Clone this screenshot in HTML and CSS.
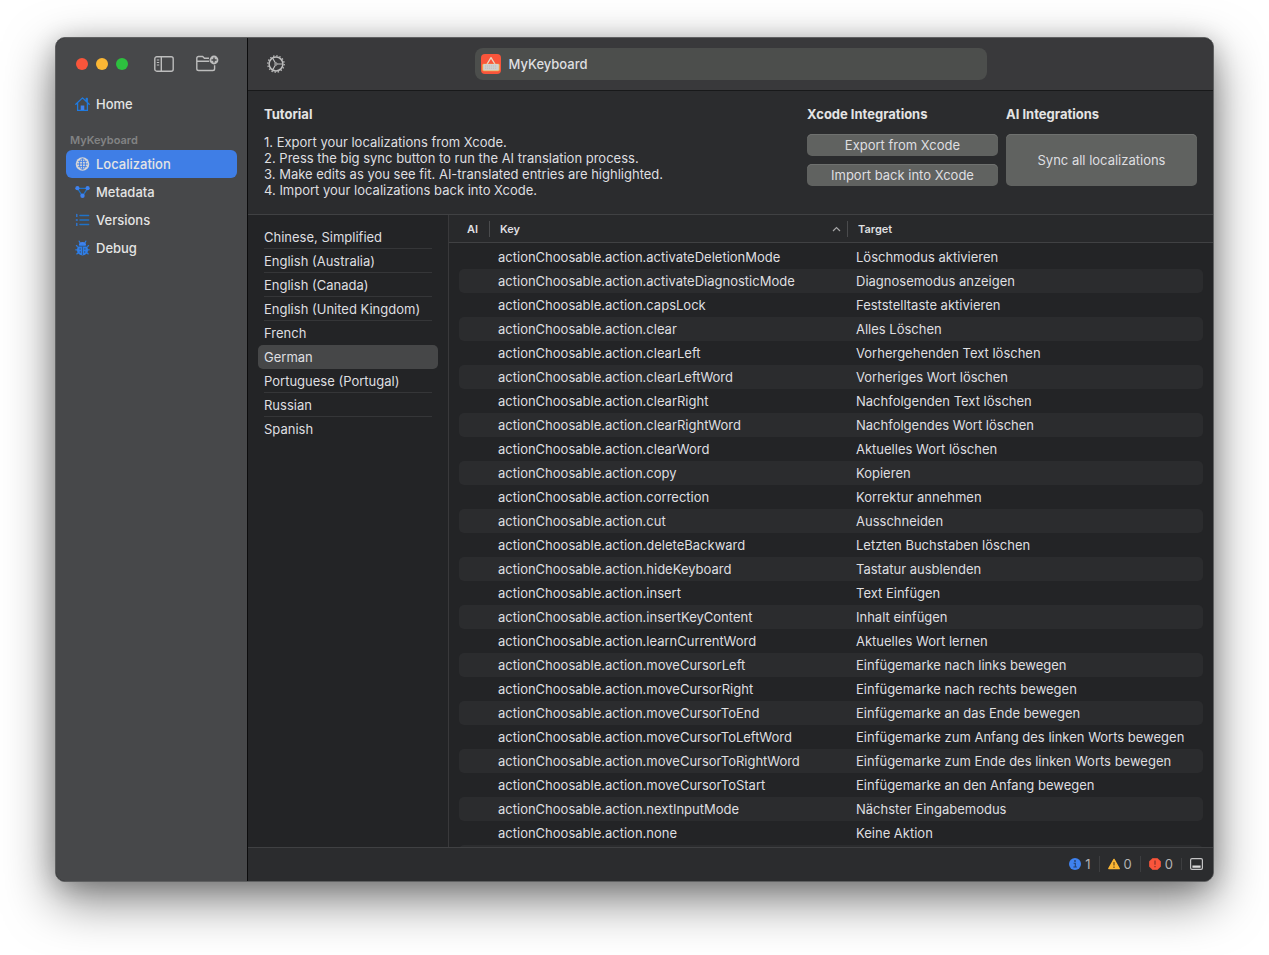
FILE: index.html
```html
<!DOCTYPE html>
<html lang="en">

<head>
	<meta charset="UTF-8">
	<title>MyKeyboard</title>
	<link rel="stylesheet" href="styles.css">
</head>

<body>
	<div class="window">
		<!-- Sidebar -->
		<aside class="sidebar">
			<div class="sidebar-toolbar">
				<div class="lights">
					<button class="light red" aria-label="Close"></button>
					<button class="light yellow" aria-label="Minimize"></button>
					<button class="light green" aria-label="Zoom"></button>
				</div>
				<button class="icon-button toggle-sidebar" aria-label="Toggle sidebar">
					<svg width="20" height="16" viewBox="0 0 20 16" fill="none" stroke="currentColor" stroke-width="1.4">
						<rect x="0.8" y="0.8" width="18.4" height="14.4" rx="2" />
						<path d="M7.3 1v14" />
						<path d="M2.8 4h2.4M2.8 6.5h2.4M2.8 9h2.4" stroke-width="1.1" />
					</svg>
				</button>
				<button class="icon-button" aria-label="New project">
					<svg width="23" height="18" viewBox="0 0 23 18" fill="none" stroke="currentColor" stroke-width="1.4" stroke-linejoin="round">
						<path d="M13 3.2H8.4L6.7 1.5H2.6Q.8 1.5.8 3.3v10.4q0 1.8 1.8 1.8h14.2q1.8 0 1.8-1.8v-3.5M.8 6.3h12.4" />
						<circle cx="18" cy="5" r="4.4" fill="currentColor" stroke="none" />
						<path d="M18 2.4v5.2M15.4 5h5.2" stroke="#47484a" />
					</svg>
				</button>
			</div>

			<nav class="nav">
				<a href="#home" class="nav-item">
					<svg width="15" height="14" viewBox="0 0 15 14" fill="none" stroke="#1f7ae0" stroke-width="1.3" stroke-linejoin="round" stroke-linecap="round">
						<path d="M.8 7.2 7.5.9l6.7 6.3M2.6 6.4v7h9.8v-7M11.3 4V1.5h1v3.6" />
						<path d="M5.7 13V8.4h3.6V13z" fill="#3f82ef" stroke="none" />
					</svg>
					Home
				</a>
				<h2 class="nav-title">MyKeyboard</h2>
				<a href="#localization" class="nav-item active">
					<svg width="15" height="14" viewBox="0 0 15 14">
						<circle cx="7.5" cy="7" r="6.8" fill="#d4d4d6" />
						<g fill="none" stroke="#3f7ee6" stroke-width="0.9">
							<ellipse cx="7.5" cy="7" rx="3" ry="5.4" />
							<path d="M7.5 2v10M2 7h11M3.2 4.4h8.6M3.2 9.6h8.6" />
						</g>
					</svg>
					Localization
				</a>
				<a href="#metadata" class="nav-item">
					<svg width="15" height="14" viewBox="0 0 15 14">
						<path d="M2.5 3.3h10L7.5 11z" fill="none" stroke="#1f72c8" stroke-width="1.3" />
						<circle cx="2.4" cy="3.2" r="2.1" fill="#3f82ef" />
						<circle cx="12.6" cy="3.2" r="2.1" fill="#3f82ef" />
						<circle cx="7.5" cy="10.8" r="2.2" fill="#3f82ef" />
					</svg>
					Metadata
				</a>
				<a href="#versions" class="nav-item">
					<svg width="15" height="14" viewBox="0 0 15 14" fill="none" stroke="#1f72c8" stroke-width="1.5" stroke-linecap="round">
						<path d="M5 2.5h8.6M5 7h8.6M5 11.5h8.6" />
						<path d="M1.8 1.4v2M1.3 7h1M1.8 10.4v2" stroke="#2a7be0" stroke-width="1.3" />
					</svg>
					Versions
				</a>
				<a href="#debug" class="nav-item">
					<svg width="15" height="16" viewBox="0 0 15 16">
						<g fill="none" stroke="#2a7be0" stroke-width="1.3" stroke-linecap="round">
							<path d="M5.1 3 4.2 1.2M9.9 3l.9-1.8M3 7 1.4 5.6M12 7l1.6-1.4M2.6 9.8H.8M12.4 9.8h1.8M3.5 12.4l-1.7 1.5M11.5 12.4l1.7 1.5" />
						</g>
						<path d="M3.8 5.4Q4 2 7.5 2t3.7 3.4z" fill="#3f82ef" />
						<ellipse cx="7.5" cy="10" rx="5.6" ry="5.4" fill="#2f7de6" />
						<path d="M2.8 6.3h9.4M7.5 6.5V15" stroke="#35506f" stroke-width="0.7" />
						<g fill="#35506f">
							<circle cx="5.1" cy="9" r="0.7" />
							<circle cx="9.9" cy="9" r="0.7" />
							<circle cx="5.3" cy="12" r="0.7" />
							<circle cx="9.7" cy="12" r="0.7" />
						</g>
					</svg>
					Debug
				</a>
			</nav>
		</aside>

		<main class="main">
			<!-- Title bar -->
			<header class="titlebar">
				<button class="icon-button gear" aria-label="Settings">
					<svg width="20" height="20" viewBox="0 0 20 20" fill="none" stroke="currentColor">
						<circle cx="10" cy="10" r="6.9" stroke-width="1.5" />
						<circle cx="10" cy="10" r="8.2" stroke-width="1.3" stroke-dasharray="1.4 1.82" />
						<circle cx="10" cy="10" r="1.2" stroke-width="1" />
						<path d="M11.4 10h5.2M9.3 8.8 6.7 4.3M9.3 11.2l-2.6 4.5" stroke-width="1.2" />
					</svg>
				</button>
				<button class="project">
					<svg width="20" height="20" viewBox="0 0 20 20">
						<rect width="20" height="20" rx="4" fill="#f9553b" />
						<path d="M5.8 10.5 10 3.6l4.2 6.9" fill="none" stroke="#e8d8c4" stroke-width="1.3" stroke-linejoin="round" />
						<rect x="1.3" y="9.8" width="17.4" height="7.4" rx="1.4" fill="#f2b04c" />
						<rect x="2.2" y="10" width="15.6" height="6.6" rx="1" fill="#d0d0ce" />
						<path d="M4 12h12M4 14.2h12" stroke="#b4b4b4" stroke-width="0.7" stroke-dasharray="1.2 .8" />
					</svg>
					MyKeyboard
				</button>
			</header>

			<!-- Tutorial and actions -->
			<section class="actions">
				<div class="tutorial">
					<h3>Tutorial</h3>
					<ol>
						<li>Export your localizations from Xcode.</li>
						<li>Press the big sync button to run the AI translation process.</li>
						<li>Make edits as you see fit. AI-translated entries are highlighted.</li>
						<li>Import your localizations back into Xcode.</li>
					</ol>
				</div>
				<div class="action-group">
					<h3>Xcode Integrations</h3>
					<button class="action">Export from Xcode</button>
					<button class="action">Import back into Xcode</button>
				</div>
				<div class="action-group">
					<h3>AI Integrations</h3>
					<button class="action big">Sync all localizations</button>
				</div>
			</section>

			<div class="content">
				<ul class="languages">
					<li><button>Chinese, Simplified</button></li>
					<li><button>English (Australia)</button></li>
					<li><button>English (Canada)</button></li>
					<li><button>English (United Kingdom)</button></li>
					<li><button>French</button></li>
					<li class="selected"><button>German</button></li>
					<li><button>Portuguese (Portugal)</button></li>
					<li><button>Russian</button></li>
					<li><button>Spanish</button></li>
				</ul>

				<div class="table-wrap">
					<table>
						<colgroup>
							<col class="col-ai">
							<col class="col-key">
							<col>
						</colgroup>
						<thead>
							<tr>
								<th><span>AI</span></th>
								<th>
									<span>Key
										<svg width="9" height="6" viewBox="0 0 9 6" fill="none" stroke="#a5a5a6" stroke-width="1.2"><path d="M1 5l3.5-3.5L8 5" /></svg>
									</span>
								</th>
								<th><span>Target</span></th>
							</tr>
						</thead>
						<tbody>
							<tr><td></td><td>actionChoosable.action.activateDeletionMode</td><td>Löschmodus aktivieren</td></tr>
							<tr><td></td><td>actionChoosable.action.activateDiagnosticMode</td><td>Diagnosemodus anzeigen</td></tr>
							<tr><td></td><td>actionChoosable.action.capsLock</td><td>Feststelltaste aktivieren</td></tr>
							<tr><td></td><td>actionChoosable.action.clear</td><td>Alles Löschen</td></tr>
							<tr><td></td><td>actionChoosable.action.clearLeft</td><td>Vorhergehenden Text löschen</td></tr>
							<tr><td></td><td>actionChoosable.action.clearLeftWord</td><td>Vorheriges Wort löschen</td></tr>
							<tr><td></td><td>actionChoosable.action.clearRight</td><td>Nachfolgenden Text löschen</td></tr>
							<tr><td></td><td>actionChoosable.action.clearRightWord</td><td>Nachfolgendes Wort löschen</td></tr>
							<tr><td></td><td>actionChoosable.action.clearWord</td><td>Aktuelles Wort löschen</td></tr>
							<tr><td></td><td>actionChoosable.action.copy</td><td>Kopieren</td></tr>
							<tr><td></td><td>actionChoosable.action.correction</td><td>Korrektur annehmen</td></tr>
							<tr><td></td><td>actionChoosable.action.cut</td><td>Ausschneiden</td></tr>
							<tr><td></td><td>actionChoosable.action.deleteBackward</td><td>Letzten Buchstaben löschen</td></tr>
							<tr><td></td><td>actionChoosable.action.hideKeyboard</td><td>Tastatur ausblenden</td></tr>
							<tr><td></td><td>actionChoosable.action.insert</td><td>Text Einfügen</td></tr>
							<tr><td></td><td>actionChoosable.action.insertKeyContent</td><td>Inhalt einfügen</td></tr>
							<tr><td></td><td>actionChoosable.action.learnCurrentWord</td><td>Aktuelles Wort lernen</td></tr>
							<tr><td></td><td>actionChoosable.action.moveCursorLeft</td><td>Einfügemarke nach links bewegen</td></tr>
							<tr><td></td><td>actionChoosable.action.moveCursorRight</td><td>Einfügemarke nach rechts bewegen</td></tr>
							<tr><td></td><td>actionChoosable.action.moveCursorToEnd</td><td>Einfügemarke an das Ende bewegen</td></tr>
							<tr><td></td><td>actionChoosable.action.moveCursorToLeftWord</td><td>Einfügemarke zum Anfang des linken Worts bewegen</td></tr>
							<tr><td></td><td>actionChoosable.action.moveCursorToRightWord</td><td>Einfügemarke zum Ende des linken Worts bewegen</td></tr>
							<tr><td></td><td>actionChoosable.action.moveCursorToStart</td><td>Einfügemarke an den Anfang bewegen</td></tr>
							<tr><td></td><td>actionChoosable.action.nextInputMode</td><td>Nächster Eingabemodus</td></tr>
							<tr><td></td><td>actionChoosable.action.none</td><td>Keine Aktion</td></tr>
							<tr><td></td><td></td><td></td></tr>
						</tbody>
					</table>
				</div>
			</div>

			<!-- Status bar -->
			<footer class="statusbar">
				<button class="status">
					<svg width="12" height="12" viewBox="0 0 12 12">
						<circle cx="6" cy="6" r="6" fill="#3f82ef" />
						<path d="M4.6 5.2H6.3V9M4.4 9h3.4" fill="none" stroke="#24406e" stroke-width="1.1" />
						<circle cx="6" cy="3" r="0.9" fill="#24406e" />
					</svg>
					1
				</button>
				<button class="status">
					<svg width="12" height="12" viewBox="0 0 12 12">
						<path d="M6 1.4 11.2 10.6H.8z" fill="#fbb735" stroke="#fbb735" stroke-width="1.4" stroke-linejoin="round" />
						<path d="M6 4v3.4M6 8.6v1.3" stroke="#6b4a1b" stroke-width="1.2" />
					</svg>
					0
				</button>
				<button class="status">
					<svg width="12" height="12" viewBox="0 0 12 12">
						<path d="M3.6.2h4.8l3.4 3.4v4.8l-3.4 3.4H3.6L.2 8.4V3.6z" fill="#f9553b" stroke="#f9553b" stroke-width="0.4" stroke-linejoin="round" />
						<path d="M6 2.6v4.2M6 8v1.3" stroke="#7c2f25" stroke-width="1.1" />
					</svg>
					0
				</button>
				<button class="status" aria-label="Toggle console">
					<svg width="13" height="12" viewBox="0 0 13 12">
						<rect x="0.6" y="0.6" width="11.8" height="10.8" rx="1.4" fill="none" stroke="#c4c4c5" stroke-width="1.2" />
						<path d="M2.4 7.4h8.2v2.4H2.4z" fill="#dcdcdc" />
					</svg>
				</button>
			</footer>
		</main>
	</div>
</body>

</html>
```
FILE: styles.css
```css
* {
	box-sizing: border-box;
}

body {
	display: flex;
	height: 100vh;
	margin: 0;
	padding: 37px 55px 73px;
	background: #fff;
	color: #dfdfe0;
	font: 13px/16px Inter, "Liberation Sans", sans-serif;
	overflow: hidden;
}

h2,
h3,
ul,
ol {
	margin: 0;
	padding: 0;
}

button {
	padding: 0;
	border: 0;
	background: none;
	color: inherit;
	font: inherit;
}

svg {
	display: block;
	flex: none;
}

.window {
	display: flex;
	flex: 1;
	min-width: 0;
	border: 1px solid #5f6061;
	border-radius: 10px;
	background: #232426;
	box-shadow: 0 18px 50px rgba(0, 0, 0, 0.5), 0 4px 24px rgba(0, 0, 0, 0.2);
	overflow: hidden;
}

/* Sidebar */
.sidebar {
	flex: none;
	width: 192px;
	border-right: 1px solid #0c0c0d;
	background: #47484a;
}

.sidebar-toolbar {
	display: flex;
	align-items: center;
	height: 52px;
	padding-left: 20px;
}

.lights {
	display: flex;
	gap: 8px;
	margin-right: 26px;
}

.light {
	width: 12px;
	height: 12px;
	border-radius: 50%;
}

.red {
	background: #f9553b;
}

.yellow {
	background: #fbb735;
}

.green {
	background: #2dc03f;
}

.icon-button {
	color: #bdbdbd;
}

.toggle-sidebar {
	margin-right: 22px;
}

.nav {
	padding: 0 10px;
}

.nav-item {
	display: flex;
	align-items: center;
	gap: 6px;
	height: 28px;
	padding-left: 9px;
	border-radius: 6px;
	color: #e4e4e4;
	font-weight: 500;
	text-decoration: none;
}

.nav-item.active {
	background: #3f7ee6;
}

.nav-title {
	padding: 14px 4px 2px;
	color: #828384;
	font-size: 11px;
	font-weight: 600;
}

/* Main area */
.main {
	display: flex;
	flex: 1;
	flex-direction: column;
	min-width: 0;
}

.titlebar {
	display: grid;
	grid-template-columns: 1fr minmax(0, 512px) 1fr;
	align-items: center;
	height: 53px;
	border-bottom: 1px solid #18191a;
	background: #39393b;
}

.gear {
	margin-left: 18px;
}

.project {
	display: flex;
	align-items: center;
	gap: 8px;
	height: 32px;
	padding: 0 6px;
	border-radius: 8px;
	background: #4c4e4c;
	font-weight: 500;
}

.actions {
	display: flex;
	gap: 8px;
	padding: 15px 16px 16px;
	border-bottom: 1px solid #404143;
	background: #2b2c2e;
}

.actions h3 {
	margin-bottom: 12px;
	color: #e4e4e4;
	font-size: 13px;
	font-weight: 700;
}

.tutorial {
	flex: 1;
}

.tutorial ol {
	counter-reset: step;
	list-style: none;
}

.tutorial li::before {
	counter-increment: step;
	content: counter(step) ". ";
}

.action-group {
	width: 191px;
}

.action {
	display: block;
	width: 100%;
	height: 22px;
	margin-bottom: 8px;
	border-radius: 5px;
	background: #606260;
	box-shadow: inset 0 1px #6f716f;
}

.action.big {
	height: 52px;
}

.content {
	display: flex;
	flex: 1;
	min-height: 0;
}

/* Languages */
.languages {
	flex: none;
	width: 201px;
	padding: 10px;
	border-right: 1px solid #39393b;
	list-style: none;
}

.languages li {
	height: 24px;
	padding: 0 6px;
	border-radius: 5px;
}

.languages button {
	display: block;
	width: 100%;
	height: 24px;
	border-bottom: 1px solid #353638;
	text-align: left;
}

.languages .selected {
	background: #464748;
}

.languages .selected button,
.languages li:last-child button,
.languages li:has(+ .selected) button {
	border-color: transparent;
}

/* Strings table */
.table-wrap {
	flex: 1;
	min-width: 0;
	overflow: hidden;
}

table {
	width: 100%;
	table-layout: fixed;
	border-collapse: separate;
	border-spacing: 0;
}

.col-ai {
	width: 41px;
}

.col-key {
	width: 358px;
}

th {
	height: 28px;
	padding: 0;
	border-bottom: 1px solid #404143;
	background: #28292b;
	font-size: 11px;
	font-weight: 600;
	text-align: left;
}

th span {
	display: flex;
	align-items: center;
	justify-content: space-between;
	padding: 0 6px 0 10px;
	border-right: 1px solid #4a4b4d;
}

th:first-child span {
	padding-left: 18px;
}

th:last-child span {
	border-right: 0;
}

/* sliver between the header and the first row */
tbody::before {
	display: table-row;
	height: 2px;
	content: "";
}

td {
	height: 24px;
	padding: 0 8px;
	overflow: hidden;
	text-overflow: ellipsis;
	white-space: nowrap;
}

tr:nth-child(even) td {
	background: #2b2c2e;
	background-clip: padding-box;
}

td:first-child {
	border-left: 10px solid transparent;
	border-radius: 15px 0 0 15px / 5px 0 0 5px;
}

td:last-child {
	border-right: 10px solid transparent;
	border-radius: 0 15px 15px 0 / 0 5px 5px 0;
}

/* Status bar */
.statusbar {
	display: flex;
	align-items: center;
	justify-content: flex-end;
	height: 34px;
	padding: 0 10px 2px 0;
	border-top: 1px solid #404143;
	background: #2b2c2e;
}

.status {
	display: flex;
	align-items: center;
	gap: 4px;
	color: #b4b4b5;
}

.status + .status {
	margin-left: 8px;
	padding-left: 8px;
	border-left: 1px solid #3d3e40;
}
```
